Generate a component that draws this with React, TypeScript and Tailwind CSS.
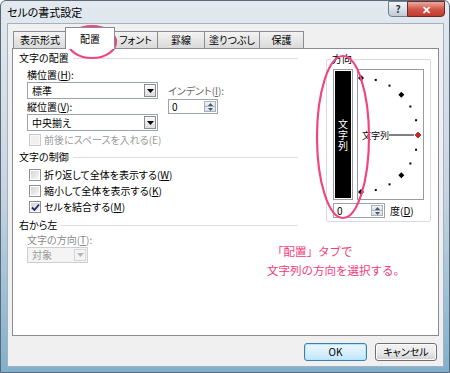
import clsx from 'clsx';

const tabs = [
  { label: '表示形式', w: 'w-[54px]' },
  { label: '配置', w: 'w-[50px]', active: true },
  { label: 'フォント', w: 'w-[45px]' },
  { label: '罫線', w: 'w-[48px]' },
  { label: '塗りつぶし', w: 'w-[56px]' },
  { label: '保護', w: 'w-[45px]' },
];

const Heading = ({ text, className }: { text: string; className?: string }) => (
  <div className={clsx('flex items-center h-[14px]', className)}>
    <span>{text}</span>
    <span className="flex-1 ml-[4px] border-t border-[#d9dee3]" />
  </div>
);

const Check = ({ checked, disabled }: { checked?: boolean; disabled?: boolean }) => (
  <span
    className={clsx(
      'w-[12px] h-[12px] border p-px flex shrink-0',
      disabled ? 'border-[#c9c9c9] bg-[#f7f7f7]' : 'border-[#8e8f8f] bg-white'
    )}
  >
    <span
      className={clsx(
        'flex-1 flex items-center justify-center',
        disabled ? 'bg-[#f0f0f0]' : 'bg-linear-to-br from-[#d4d4d4] to-[#f7f7f7]'
      )}
    >
      {checked && (
        <svg width="9" height="9" viewBox="0 0 9 9">
          <path d="M1 4.5 L3.5 7 L8 1.5" fill="none" stroke="#1c2a6e" strokeWidth="1.8" />
        </svg>
      )}
    </span>
  </span>
);

const Select = ({ value, className, disabled }: { value: string; className?: string; disabled?: boolean }) => (
  <div
    className={clsx(
      'flex items-center justify-between border p-px',
      disabled ? 'border-[#cfcfcf] bg-[#f4f4f4] text-[#9a9a9a]' : 'border-[#9da3ab] bg-white',
      className
    )}
  >
    <span className="pl-[3px]">{value}</span>
    <span
      className={clsx(
        'w-[12px] h-full border flex items-center justify-center',
        disabled ? 'border-[#d6d6d6] bg-[#f4f4f4]' : 'border-[#8c8c8c] bg-linear-to-b from-[#fafafa] to-[#dedede]'
      )}
    >
      <svg width="7" height="4" viewBox="0 0 7 4">
        <path d="M0 0 H7 L3.5 4 Z" fill={disabled ? '#b5b5b5' : '#000'} />
      </svg>
    </span>
  </div>
);

const Spin = ({ className }: { className?: string }) => (
  <div className={clsx('flex border border-[#9da3ab] bg-white p-px', className)}>
    <span className="flex-1 pl-[2px] leading-[12px]">0</span>
    <span className="w-[12px] flex flex-col border border-[#a7b2bf]">
      <span className="flex-1 flex items-center justify-center bg-linear-to-b from-[#f3f6f9] to-[#d8dfe6] border-b border-[#a7b2bf]">
        <svg width="5" height="3" viewBox="0 0 5 3">
          <path d="M0 3 H5 L2.5 0 Z" fill="#4b5563" />
        </svg>
      </span>
      <span className="flex-1 flex items-center justify-center bg-linear-to-b from-[#eef2f6] to-[#d3dae2]">
        <svg width="5" height="3" viewBox="0 0 5 3">
          <path d="M0 0 H5 L2.5 3 Z" fill="#4b5563" />
        </svg>
      </span>
    </span>
  </div>
);

const Arc = () => {
  const cx = 3;
  const cy = 65;
  const r = 57;
  const angles = [-90, -75, -60, -45, -30, -15, 0, 15, 30, 45, 60, 75, 90];
  return (
    <svg width="65" height="129" viewBox="0 0 65 129">
      {angles.map((a) => {
        const rad = (a * Math.PI) / 180;
        const x = cx + r * Math.cos(rad);
        const y = cy - r * Math.sin(rad);
        if (a === 0)
          return (
            <polygon
              key={a}
              points={`${x},${y - 3} ${x + 3},${y} ${x},${y + 3} ${x - 3},${y}`}
              fill="#d81e1e"
              stroke="#7a1010"
              strokeWidth="0.6"
            />
          );
        if (a % 45 === 0)
          return <polygon key={a} points={`${x},${y - 3} ${x + 3},${y} ${x},${y + 3} ${x - 3},${y}`} fill="#000" />;
        return <rect key={a} x={x - 1} y={y - 1} width="2" height="2" fill="#000" />;
      })}
      <text x="4" y="68.5" fontSize="9" fontFamily="Noto Sans CJK JP, sans-serif" fill="#000">
        文字列
      </text>
      <line x1="31" y1="65" x2="56" y2="65" stroke="#000" strokeWidth="1" />
    </svg>
  );
};

export default function App() {
  return (
    <div className="relative w-[450px] h-[373px] overflow-hidden flex flex-col border border-[#5a6878] rounded-t-[6px] bg-linear-to-b from-[#e3e9ef] via-[#c8d5e2] to-[#7fb0cc] pl-[6px] pr-[5px] text-[10px] text-black font-['Noto_Sans_CJK_JP',sans-serif] [font-feature-settings:'palt']">
      {/* title bar */}
      <div className="h-[22px] flex items-start justify-between">
        <span className="pt-[4px] text-[11px] leading-[14px]">セルの書式設定</span>
        <div className="flex -mr-[1px]">
          <span className="w-[20px] h-[16px] flex items-center justify-center border border-[#6f7f8f] rounded-bl-[4px] bg-linear-to-b from-[#f4f7fa] to-[#bfcbd7] text-[10px] leading-none font-bold text-[#2c3a48]">
            ?
          </span>
          <span className="w-[38px] h-[16px] -ml-px flex items-center justify-center border border-[#6b2a23] rounded-br-[4px] bg-linear-to-b from-[#e9aa9e] via-[#d0574a] to-[#c03a2c] text-white text-[11px] leading-none font-bold">
            ✕
          </span>
        </div>
      </div>

      {/* dialog body */}
      <div className="flex-1 mb-[5px] flex flex-col border border-[#a3b1bf] bg-[#f0f0f0] px-[4px] pb-[5px]">
        {/* tabs */}
        <div className="mt-[3px] h-[21px] flex items-end pl-[1px]">
          {tabs.map((t, i) => (
            <div
              key={t.label}
              className={clsx(
                'flex items-center justify-center border border-b-0 border-[#898c95] leading-none',
                t.w,
                t.active
                  ? 'relative z-10 h-[22px] -mb-px -mx-[2px] bg-white'
                  : 'h-[17px] bg-linear-to-b from-[#f3f3f3] to-[#dadada]',
                !t.active && i > 0 && !tabs[i - 1].active && '-ml-px'
              )}
            >
              {t.label}
            </div>
          ))}
        </div>

        {/* panel */}
        <div className="h-[288px] border border-[#898c95] bg-white flex pl-[6px] pr-[6px] leading-[14px]">
          {/* left column */}
          <div className="w-[279px] flex flex-col">
            <Heading text="文字の配置" className="mt-[2px]" />
            <div className="mt-[3px] ml-[8px] h-[14px]">
              横位置(<u>H</u>):
            </div>
            <div className="ml-[8px] flex">
              <div className="w-[131px] flex flex-col">
                <Select value="標準" className="h-[17px]" />
                <div className="mt-px h-[14px]">
                  縦位置(<u>V</u>):
                </div>
                <Select value="中央揃え" className="h-[17px]" />
              </div>
              <div className="ml-[10px] flex flex-col">
                <div className="mt-[2px] h-[14px] text-[#6a6a6a]">
                  インデント(<u>I</u>):
                </div>
                <Spin className="mt-px w-[50px] h-[15px]" />
              </div>
            </div>
            <div className="mt-[2px] ml-[10px] h-[14px] flex items-center gap-[3px] text-[#9a9a9a]">
              <Check disabled />
              <span>前後にスペースを入れる(E)</span>
            </div>

            <Heading text="文字の制御" className="mt-[3px]" />
            <div className="mt-[4px] ml-[10px] flex flex-col gap-[2px]">
              <div className="h-[14px] flex items-center gap-[3px]">
                <Check />
                <span>
                  折り返して全体を表示する(<u>W</u>)
                </span>
              </div>
              <div className="h-[14px] flex items-center gap-[3px]">
                <Check />
                <span>
                  縮小して全体を表示する(<u>K</u>)
                </span>
              </div>
              <div className="h-[14px] flex items-center gap-[3px]">
                <Check checked />
                <span>
                  セルを結合する(<u>M</u>)
                </span>
              </div>
            </div>

            <Heading text="右から左" className="mt-[4px]" />
            <div className="mt-px ml-[8px] h-[14px] text-[#8a8a8a]">
              文字の方向(<u>T</u>):
            </div>
            <Select value="対象" disabled className="ml-[8px] w-[61px] h-[16px]" />
          </div>

          {/* right column */}
          <div className="ml-[28px] w-[105px] flex flex-col">
            <fieldset className="mt-[3px] border border-[#d5dbe1] rounded-[2px] pl-[6px] pb-[3px]">
              <legend className="-ml-[2px] px-[1px] h-[14px] leading-[14px]">方向</legend>
              <div className="mt-[3px] flex">
                <div className="w-[20px] h-[131px] border border-[#9a9a9a] bg-white p-px flex">
                  <div className="flex-1 bg-black flex flex-col items-center justify-center text-white text-[10px] leading-[11px]">
                    <span>文</span>
                    <span>字</span>
                    <span>列</span>
                  </div>
                </div>
                <div className="ml-[4px] w-[67px] h-[131px] border border-[#9a9a9a] bg-white">
                  <Arc />
                </div>
              </div>
              <div className="mt-[3px] flex items-center">
                <Spin className="w-[52px] h-[15px]" />
                <span className="ml-[5px]">
                  度(<u>D</u>)
                </span>
              </div>
            </fieldset>
            <div className="mt-[20px] -ml-[59px] w-[170px] text-[11.5px] leading-[19px] text-[#f03c78] [font-feature-settings:normal]">
              <div className="pl-[5px]">「配置」タブで</div>
              <div>文字列の方向を選択する。</div>
            </div>
          </div>
        </div>

        {/* buttons */}
        <div className="mt-[7px] flex justify-end gap-[8px] pr-[2px]">
          <button className="w-[63px] h-[18px] rounded-[3px] border border-[#3c7fb1] bg-linear-to-b from-[#eaf6fd] via-[#d9f0fc] to-[#bee6fd] shadow-[inset_0_0_0_1px_#b8e4f8] text-[10px] leading-none">
            OK
          </button>
          <button className="w-[62px] h-[18px] rounded-[3px] border border-[#707070] bg-linear-to-b from-[#f2f2f2] via-[#ebebeb] to-[#cfcfcf] shadow-[inset_0_0_0_1px_#fcfcfc] text-[10px] leading-none">
            キャンセル
          </button>
        </div>
      </div>

      {/* annotation marks */}
      <svg className="absolute inset-0 pointer-events-none" width="450" height="373" viewBox="0 0 450 373">
        <ellipse cx="91" cy="41" rx="24" ry="16" fill="none" stroke="#f0457e" strokeWidth="2.2" />
        <ellipse cx="342" cy="136" rx="26" ry="81" fill="none" stroke="#f0457e" strokeWidth="2.2" />
      </svg>
    </div>
  );
}
